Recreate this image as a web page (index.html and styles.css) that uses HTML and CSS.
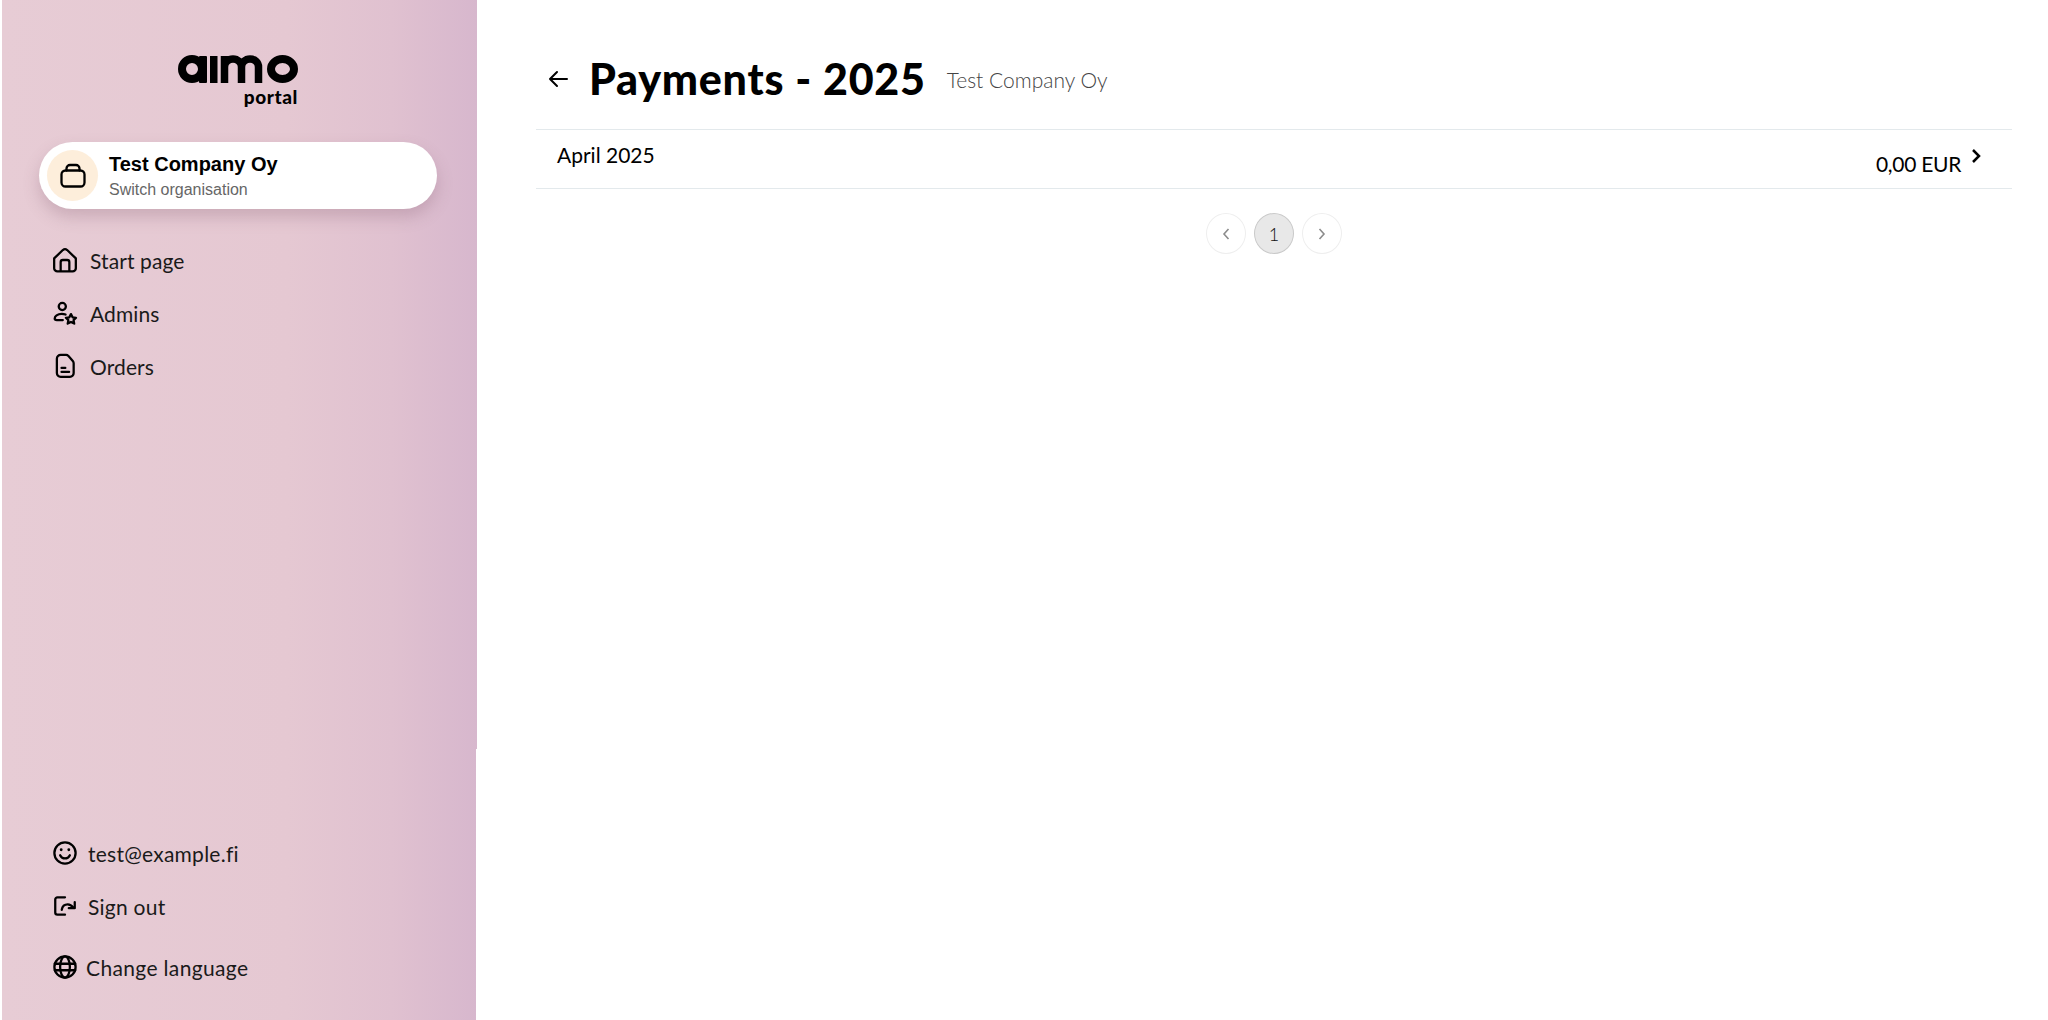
FILE: index.html
```html
<!DOCTYPE html>
<html lang="en">
<head>
<meta charset="utf-8">
<title>Payments - 2025</title>
<link rel="stylesheet" href="styles.css">
</head>
<body>
<div class="app">
  <aside class="sidebar">
    <div class="logo">
      <svg class="logo-mark" viewBox="0 0 120 28" role="img" aria-label="aimo">
        <title>aimo</title>
        <ellipse cx="14" cy="14" rx="10" ry="10" fill="none" stroke="#000" stroke-width="8"/>
        <rect x="21" y="1" width="8" height="27" rx="1"/>
        <rect x="32" y="1" width="7.500" height="27"/>
        <path d="M46.500 28V1M46.500 12a8.500 8 0 0 1 17 0v16M63.500 12a8.500 8 0 0 1 17 0v16" fill="none" stroke="#000" stroke-width="7.500"/>
        <ellipse cx="104.500" cy="14" rx="11.500" ry="10" fill="none" stroke="#000" stroke-width="8"/>
      </svg>
      <span class="logo-sub">portal</span>
    </div>
    <button class="org">
      <span class="org-icon">
        <svg class="icon-org" viewBox="0 0 26 26" fill="none" stroke="#000" stroke-width="2.300" stroke-linejoin="round"><rect x="1.500" y="7.500" width="23" height="16" rx="4"/><path d="M6.500 7.500V5.500a3.500 3.500 0 0 1 3.500-3.500h6a3.500 3.500 0 0 1 3.500 3.500v2" stroke-linecap="round"/></svg>
      </span>
      <span class="org-text">
        <span class="org-name">Test Company Oy</span>
        <span class="org-switch">Switch organisation</span>
      </span>
    </button>
    <nav class="nav">
      <a class="nav-item">
        <svg class="icon" viewBox="0 0 24 24"><path d="M2 10.500 10 2.800a3 3 0 0 1 4 0l8 7.700V19.500a3 3 0 0 1-3 3H5a3 3 0 0 1-3-3zM8 22.500V14a2 2 0 0 1 2-2h4a2 2 0 0 1 2 2v8.500"/></svg>
        <span>Start page</span>
      </a>
      <a class="nav-item">
        <svg class="icon" viewBox="0 0 24 24"><circle cx="9.500" cy="6" r="3.300"/><path d="M12.500 13.400C11.500 13 10.500 12.800 9 12.800c-4 0-6.500 2.200-6.500 4.200 0 1.200.8 1.500 2 1.500H10M17.500 13l1.500 3 3.200.4-2.300 2.200.6 3.200-3-1.600-3 1.600.6-3.200-2.300-2.200 3.200-.4z"/></svg>
        <span>Admins</span>
      </a>
      <a class="nav-item">
        <svg class="icon" viewBox="0 0 24 24"><path d="M8 1.800h5c1 0 1.500.3 2.200 1l4 4.500c.6.700.8 1.200.8 2.200V18.500a3.500 3.500 0 0 1-3.500 3.500H8a3.500 3.500 0 0 1-3.500-3.500V5.300A3.500 3.500 0 0 1 8 1.800zM8.800 13.800h3.500M8.800 17.500h7"/></svg>
        <span>Orders</span>
      </a>
    </nav>
    <div class="bottom">
      <a class="nav-item nav-user">
        <svg class="icon" viewBox="0 0 24 24"><circle cx="12" cy="12" r="9.800"/><path d="M7.500 14c1 2 2.600 3 4.500 3s3.500-1 4.500-3"/><circle class="dot" cx="8.500" cy="9" r="1.300"/><circle class="dot" cx="15.500" cy="9" r="1.300"/></svg>
        <span>test@example.fi</span>
      </a>
      <a class="nav-item nav-user">
        <svg class="icon" viewBox="0 0 24 24"><path d="M12 4H5a2 2 0 0 0-2 2v12a2 2 0 0 0 2 2h7M9 15.500c.5-3 2.500-5 5.500-5 2 0 3.500.8 5 3M21 8.500v5.500h-5.500"/></svg>
        <span>Sign out</span>
      </a>
      <a class="nav-item nav-lang">
        <svg class="icon" viewBox="0 0 24 24"><circle cx="12" cy="12" r="9.800"/><ellipse cx="12" cy="12" rx="4.500" ry="9.800"/><path d="M2.500 9h19M2.500 15h19"/></svg>
        <span>Change language</span>
      </a>
    </div>
  </aside>
  <main class="main">
    <header class="head">
      <svg class="back" viewBox="0 0 20 20"><path d="M19 10H2M9 3 2 10l7 7"/></svg>
      <h1 class="title">Payments - 2025</h1>
      <span class="company">Test Company Oy</span>
    </header>
    <a class="row">
      <span class="row-name">April 2025</span>
      <span class="row-end">
        <span class="row-sum">0,00 EUR</span>
        <svg class="row-chev" viewBox="0 0 10 16"><path d="M2 2l6 6-6 6"/></svg>
      </span>
    </a>
    <div class="pager">
      <span class="page page-off"><svg class="page-chev" viewBox="0 0 8 14"><path d="M6.500 2 2 7l4.500 5"/></svg></span>
      <span class="page page-on">1</span>
      <span class="page page-off"><svg class="page-chev" viewBox="0 0 8 14"><path d="M1.500 2 6 7l-4.500 5"/></svg></span>
    </div>
  </main>
</div>
</body>
</html>
```
FILE: styles.css
```css
* { box-sizing: border-box; }
html, body { margin: 0; height: 100%; background: #fff; }
body { font-family: "Lato", "Liberation Sans", sans-serif; color: #000; overflow: hidden; }
.app { display: flex; height: 1020px; padding-left: 2px; }

.sidebar {
  position: relative;
  width: 475px;
  flex: none;
  display: flex;
  flex-direction: column;
  padding: 55px 0 0;
  background: linear-gradient(90deg, #e7ccd5 0%, #e5c8d2 60%, #e0c1d0 82%, #d7b7cd 100%);
}
.sidebar::after {
  content: "";
  position: absolute;
  right: 0;
  top: 749px;
  bottom: 0;
  width: 1px;
  background: #fff;
}

.logo { display: flex; flex-direction: column; align-items: flex-end; width: 296px; }
.logo-mark { width: 120px; height: 28px; display: block; fill: #000; }
.logo-sub { font-size: 19px; font-weight: 900; line-height: 24px; margin-top: 2px; letter-spacing: .6px; }

.org {
  display: flex;
  align-items: center;
  gap: 11px;
  width: 398px;
  height: 67px;
  margin: 33px 0 0 37px;
  padding: 0 8px;
  border: 0;
  border-radius: 34px;
  background: #fff;
  box-shadow: 0 8px 16px rgba(120, 80, 100, .25);
  text-align: left;
  font-family: "Liberation Sans", sans-serif;
}
.org-icon {
  width: 51px;
  height: 51px;
  flex: none;
  display: flex;
  align-items: center;
  justify-content: center;
  border-radius: 50%;
  background: #fdeedb;
}
.icon-org { width: 26px; height: 26px; }
.org-text { display: flex; flex-direction: column; }
.org-name { font-size: 20px; font-weight: 700; line-height: 26px; color: #000; }
.org-switch { font-size: 16px; line-height: 21px; margin-top: 2px; color: #666; }

.nav { display: flex; flex-direction: column; gap: 13px; margin-top: 31px; padding-left: 50px; }
.nav-item { display: flex; align-items: center; height: 40px; gap: 12px; font-size: 21px; color: #1a1a1a; letter-spacing: .1px; }
.icon {
  width: 26px;
  height: 26px;
  flex: none;
  fill: none;
  stroke: #000;
  stroke-width: 2.100;
  stroke-linecap: round;
  stroke-linejoin: round;
}
.dot { fill: #000; stroke: none; }

.bottom { margin-top: auto; padding: 0 0 33px 50px; display: flex; flex-direction: column; gap: 13px; }
.nav-user { gap: 10px; letter-spacing: .25px; }
.nav-lang { margin-top: 8px; gap: 8px; letter-spacing: .35px; }

.main { flex: 1; min-width: 0; padding: 48px 36px 0 59px; }
.head { display: flex; align-items: center; height: 62px; padding-left: 12px; }
.back { width: 20px; height: 20px; fill: none; stroke: #000; stroke-width: 2; stroke-linecap: round; stroke-linejoin: round; flex: none; }
.title { margin: 0 0 0 21px; font-size: 43px; font-weight: 900; line-height: 62px; letter-spacing: .75px; }
.company { margin-left: 21px; font-size: 21px; font-weight: 300; color: #444; }

.row {
  display: flex;
  justify-content: space-between;
  height: 60px;
  margin: 19px 0 0;
  padding: 12px 31px 0 21px;
  border-top: 1px solid #e3e9ec;
  border-bottom: 1px solid #e3e9ec;
  font-size: 21px;
}
.row-end { display: flex; align-items: flex-start; gap: 10px; }
.row-sum { margin-top: 9px; letter-spacing: -.3px; }
.row-chev { width: 10px; height: 16px; margin-top: 6px; fill: none; stroke: #000; stroke-width: 2.500; }

.pager { display: flex; justify-content: center; gap: 8px; margin-top: 24px; }
.page {
  width: 40px;
  height: 41px;
  display: flex;
  align-items: center;
  justify-content: center;
  border-radius: 50%;
  font-size: 18px;
  font-weight: 300;
}
.page-off { border: 1px solid #eee; }
.page-on { border: 1px solid #c9c9c9; background: #e8e8e8; color: #111; }
.page-chev { width: 8px; height: 14px; fill: none; stroke: #8c8c8c; stroke-width: 1.600; }
```
